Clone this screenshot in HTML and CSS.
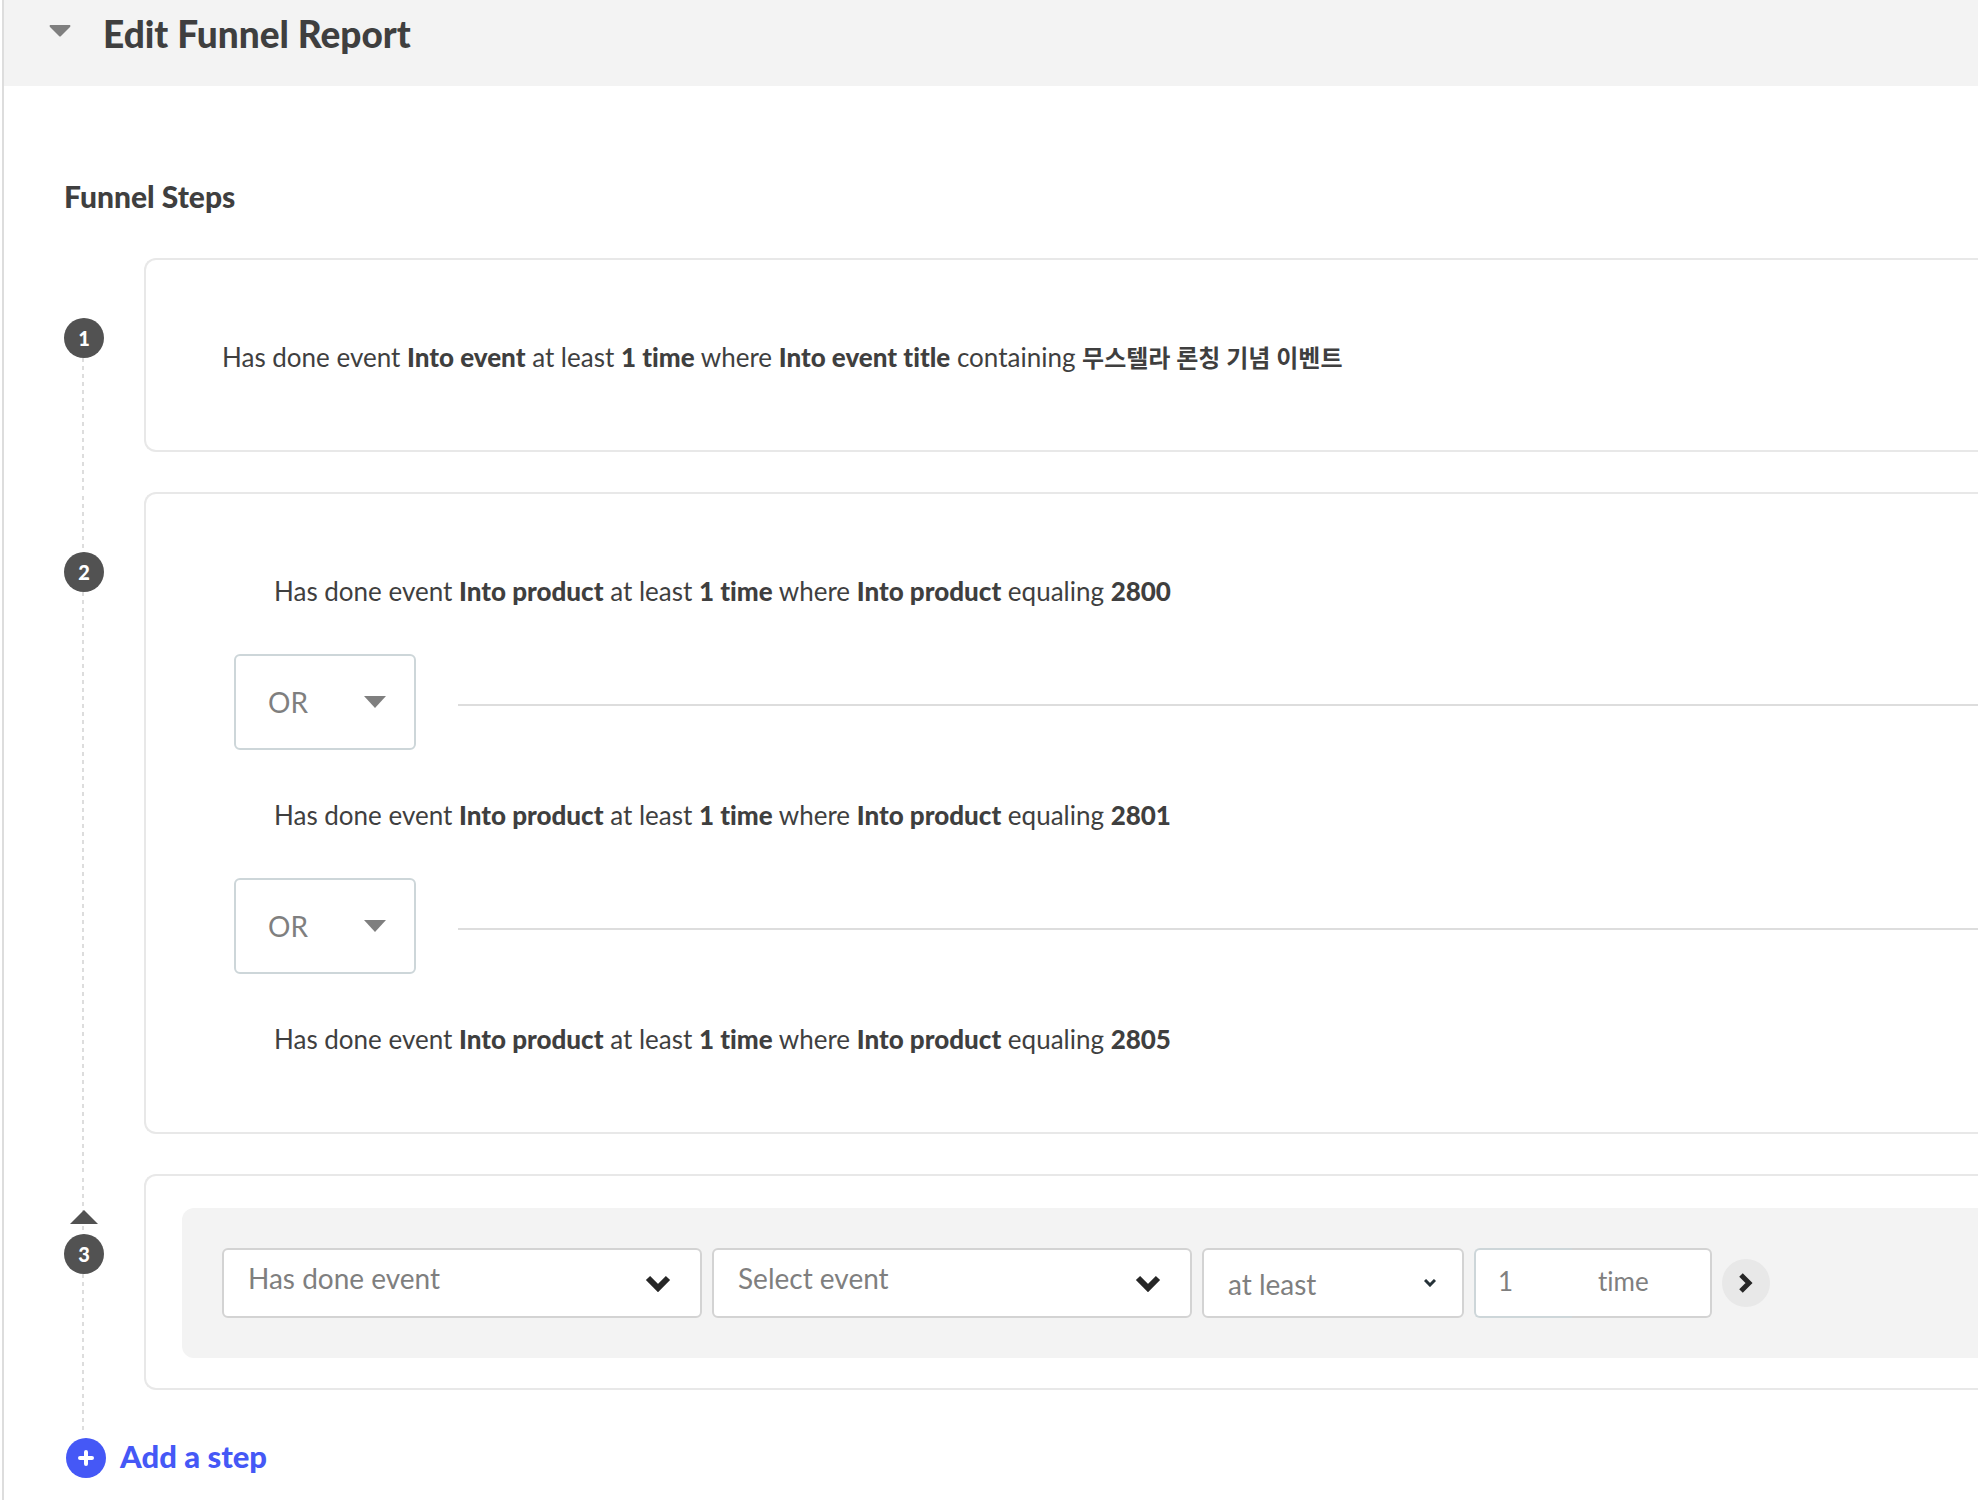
FILE: index.html
```html
<!DOCTYPE html>
<html lang="en">
<head>
<meta charset="utf-8">
<title>Edit Funnel Report</title>
<meta name="viewport" content="width=device-width, initial-scale=1">
<link rel="stylesheet" href="styles.css">
</head>
<body>
<main class="report">
  <header class="report-header">
    <button class="collapse" type="button" aria-label="Collapse section">
      <svg width="22" height="12" viewBox="0 0 22 12"><path d="M1 0h20q1 1 0 2l-9 9q-1 1-2 0L1 2Q0 1 1 0z" fill="#7f7f7f"/></svg>
    </button>
    <h1 class="report-title">Edit Funnel Report</h1>
  </header>

  <section class="funnel">
    <h2 class="funnel-title">Funnel Steps</h2>
    <ol class="steps">
      <li class="step">
        <div class="rail"><span class="badge">1</span></div>
        <div class="card card-text">
          <p class="rule">Has done event <b>Into event</b> at least <b>1 time</b> where <b>Into event title</b> containing <b class="korean" lang="ko">무스텔라 론칭 기념 이벤트</b></p>
        </div>
      </li>
      <li class="step">
        <div class="rail"><span class="badge">2</span></div>
        <div class="card card-text">
          <p class="rule rule-nested">Has done event <b>Into product</b> at least <b>1 time</b> where <b>Into product</b> equaling <b>2800</b></p>
          <div class="joiner">
            <div class="picker picker-or">
              <select aria-label="First operator"><option>OR</option><option>AND</option></select>
              <svg width="22" height="12" viewBox="0 0 22 12"><path d="M0 0h22L11 12z" fill="#7f7f7f"/></svg>
            </div>
            <hr class="joiner-line">
          </div>
          <p class="rule rule-nested">Has done event <b>Into product</b> at least <b>1 time</b> where <b>Into product</b> equaling <b>2801</b></p>
          <div class="joiner">
            <div class="picker picker-or">
              <select aria-label="Second operator"><option>OR</option><option>AND</option></select>
              <svg width="22" height="12" viewBox="0 0 22 12"><path d="M0 0h22L11 12z" fill="#7f7f7f"/></svg>
            </div>
            <hr class="joiner-line">
          </div>
          <p class="rule rule-nested">Has done event <b>Into product</b> at least <b>1 time</b> where <b>Into product</b> equaling <b>2805</b></p>
        </div>
      </li>
      <li class="step">
        <div class="rail rail-movable">
          <button class="move-up" type="button" aria-label="Move step up">
            <svg width="28" height="14" viewBox="0 0 28 14"><path d="M0 14L14 0l14 14z" fill="#525252"/></svg>
          </button>
          <span class="badge">3</span>
        </div>
        <div class="card card-edit">
          <div class="editor">
            <div class="picker picker-event">
              <select aria-label="Condition"><option>Has done event</option></select>
              <svg width="26" height="18" viewBox="0 0 26 18"><path d="M3 4l10 10L23 4" fill="none" stroke="#262626" stroke-width="6"/></svg>
            </div>
            <div class="picker picker-event">
              <select aria-label="Event"><option>Select event</option></select>
              <svg width="26" height="18" viewBox="0 0 26 18"><path d="M3 4l10 10L23 4" fill="none" stroke="#262626" stroke-width="6"/></svg>
            </div>
            <div class="picker picker-amount">
              <select aria-label="Comparison"><option>at least</option></select>
              <svg width="12" height="8" viewBox="0 0 12 8"><path d="M1 1l5 5 5-5" fill="none" stroke="#263238" stroke-width="3"/></svg>
            </div>
            <div class="count">
              <input id="times" class="count-input" type="text" value="1">
              <label class="count-unit" for="times">time</label>
            </div>
            <button class="next" type="button" aria-label="More options">
              <svg width="14" height="20" viewBox="0 0 14 20"><path d="M2 2l8 8-8 8" fill="none" stroke="#262626" stroke-width="5"/></svg>
            </button>
          </div>
        </div>
      </li>
    </ol>
    <button class="add-step" type="button">
      <svg width="40" height="40" viewBox="0 0 40 40"><circle cx="20" cy="20" r="20" fill="#4558f6"/><path d="M20 14v12M14 20h12" stroke="#fff" stroke-width="4" stroke-linecap="round"/></svg>
      Add a step
    </button>
  </section>
</main>
</body>
</html>
```

FILE: styles.css
```css
* { box-sizing: border-box; }

body {
  margin: 0;
  background: #fff;
  color: #3f3f3f;
  font-family: Lato, "Noto Sans CJK KR", sans-serif;
  font-size: 26px;
  font-variant-ligatures: none;
}

b { font-weight: 900; }

button, select, input { font: inherit; color: inherit; }

button {
  padding: 0;
  border: 0;
  background: none;
  cursor: pointer;
}

svg { display: block; }

.report {
  min-height: 100vh;
  margin-left: 2px;
  border-left: 2px solid #ddd;
}

.report-header {
  display: flex;
  align-items: flex-start;
  gap: 32px;
  height: 86px;
  padding: 10px 45px;
  background: #f3f3f3;
}

.collapse { padding-top: 15px; }

.report-title {
  margin: 0;
  font-size: 37px;
  font-weight: 900;
  line-height: 48px;
}

.funnel { padding: 92px 0 20px 60px; }

.funnel-title {
  margin: 0 0 44px;
  font-size: 30px;
  font-weight: 900;
  line-height: 36px;
}

.steps {
  margin: 0;
  padding: 0;
  list-style: none;
}

.step { display: flex; gap: 40px; }

.rail {
  flex: none;
  width: 40px;
  padding-top: 60px;
  background: linear-gradient(transparent 50%, #ddd 50%) 18px 0 / 2px 8px repeat-y;
}

.step:first-child .rail { background-clip: content-box; }

.rail-movable { padding-top: 36px; }

.move-up { display: block; margin: 0 auto 10px; }

.badge {
  display: block;
  height: 40px;
  border-radius: 50%;
  background: #525252;
  color: #fff;
  font-size: 20px;
  font-weight: 900;
  line-height: 40px;
  text-align: center;
}

.card {
  flex: 1;
  min-width: 0;
  margin-bottom: 40px;
  border: 2px solid #e8e8e8;
  border-right: 0;
  border-radius: 12px 0 0 12px;
}

.card-text { padding: 80px 0 76px 76px; }

.rule {
  margin: 0;
  line-height: 34px;
}

.rule-nested { padding-left: 52px; }

.korean {
  font-size: 24px;
  font-weight: 700;
  line-height: 24px;
}

.joiner {
  display: flex;
  align-items: center;
  gap: 42px;
  margin: 46px 0 48px 12px;
}

.joiner-line {
  flex: 1;
  margin: 6px 0 0;
  border: 0;
  border-top: 2px solid #ddd;
}

.picker {
  display: grid;
  align-items: center;
  color: #7f7f7f;
  font-size: 28px;
}

.picker > * { grid-area: 1 / 1; }

.picker > svg { justify-self: end; pointer-events: none; }

.picker select {
  width: 100%;
  height: 70px;
  margin: 0;
  padding: 0 24px;
  border: 2px solid #d3d3d3;
  border-radius: 6px;
  background: #fff;
  appearance: none;
}

.picker-or { width: 182px; }

.picker-or select {
  height: 96px;
  padding: 0 32px;
  border-color: #cdd6d9;
}

.picker-or svg { margin-right: 30px; }

.picker-event { width: 480px; }
.picker-event select { padding-bottom: 10px; }
.picker-event svg { margin-right: 31px; }

.picker-amount { width: 262px; }
.picker-amount select { padding-top: 2px; }
.picker-amount svg { margin-right: 28px; }

.card-edit { padding: 32px 0 30px 36px; }

.editor {
  display: flex;
  align-items: center;
  gap: 10px;
  padding: 40px;
  border-radius: 12px 0 0 12px;
  background: #f3f3f3;
}

.count {
  display: flex;
  width: 238px;
  color: #7f7f7f;
}

.count-input {
  width: 98px;
  height: 70px;
  padding: 0 22px 4px;
  border: 2px solid #cdd6d9;
  border-right: 0;
  border-radius: 6px 0 0 6px;
  background: #fff;
}

.count-unit {
  flex: 1;
  padding-left: 26px;
  border: 2px solid #d3d3d3;
  border-left: 0;
  border-radius: 0 6px 6px 0;
  background: #fff;
  line-height: 62px;
}

.next {
  display: grid;
  place-items: center;
  width: 48px;
  height: 48px;
  border-radius: 50%;
  background: #e8e8e8;
}

.add-step {
  display: flex;
  align-items: flex-start;
  gap: 14px;
  margin: 8px 0 0 2px;
  color: #4558f6;
  font-size: 31px;
  font-weight: 900;
  line-height: 36px;
}
```
